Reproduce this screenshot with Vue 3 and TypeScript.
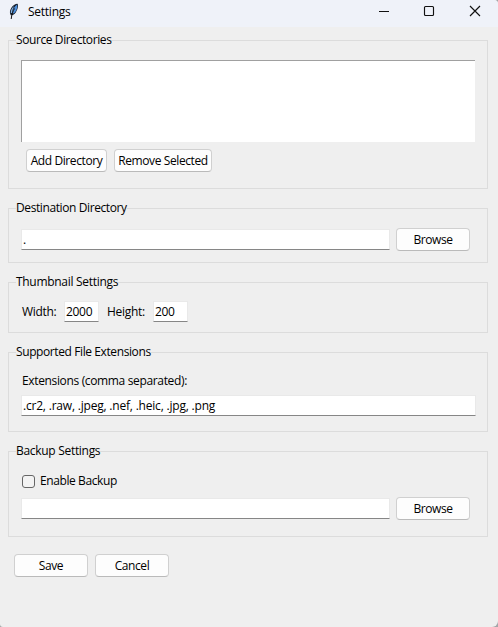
<script setup lang="ts">
import { ref } from 'vue'

const destination = ref('.')
const thumbWidth = ref('2000')
const thumbHeight = ref('200')
const extensions = ref('.cr2, .raw, .jpeg, .nef, .heic, .jpg, .png')
const backupEnabled = ref(false)
const backupPath = ref('')
</script>

<template>
  <main class="window">
    <header class="titlebar">
      <svg class="feather" width="12" height="17" viewBox="0 0 12 17">
        <path d="M3 12.500C.8 9.500 2.300 5.300 5 2.800 7 1 9.200.2 9.700 1.100c.9 1.500-.1 6-2.100 8.600-1.100 1.500-2.500 2.500-4.600 2.800z" fill="#17202e" />
        <path d="M4.300 10.800C4.300 7 6.200 3.300 9.200 1.500c.4 2.200-.4 5.800-2 7.800-.7.900-1.700 1.300-2.900 1.500z" fill="#4d8edb" />
        <path d="M2.800 10C2.500 7.500 4 4.800 6 3 5 5.500 4.200 7.600 3.900 10z" fill="#8bb9e8" />
        <path d="M6.500 5.500C5 8 3.700 11 3.200 16" fill="none" stroke="#141414" />
      </svg>
      <h1 class="title">Settings</h1>
      <svg class="controls" width="104" height="12" viewBox="0 0 104 12" fill="none" stroke="#111">
        <path d="M0 6.500h10" />
        <rect x="45.500" y="1.500" width="9" height="9" rx="1" stroke-width="1.150" />
        <path d="M91 1l10 10M101 1L91 11" stroke-width="1.150" />
      </svg>
    </header>

    <section class="group source">
      <h2 class="legend">Source Directories</h2>
      <div class="listbox"></div>
      <div class="actions">
        <button class="btn add">Add Directory</button>
        <button class="btn remove">Remove Selected</button>
      </div>
    </section>

    <section class="group destination">
      <h2 class="legend">Destination Directory</h2>
      <div class="row">
        <input v-model="destination" class="entry path" />
        <button class="btn">Browse</button>
      </div>
    </section>

    <section class="group thumbs">
      <h2 class="legend">Thumbnail Settings</h2>
      <div class="sizes">
        <label class="width-label">Width:</label>
        <input v-model="thumbWidth" class="entry small" />
        <label class="height-label">Height:</label>
        <input v-model="thumbHeight" class="entry small" />
      </div>
    </section>

    <section class="group extensions">
      <h2 class="legend">Supported File Extensions</h2>
      <label class="ext-label">Extensions (comma separated):</label>
      <input v-model="extensions" class="entry full" />
    </section>

    <section class="group backup">
      <h2 class="legend">Backup Settings</h2>
      <label class="check">
        <input v-model="backupEnabled" type="checkbox" class="box" />
        <span>Enable Backup</span>
      </label>
      <div class="row">
        <input v-model="backupPath" class="entry path" />
        <button class="btn">Browse</button>
      </div>
    </section>

    <footer class="footer">
      <button class="btn">Save</button>
      <button class="btn">Cancel</button>
    </footer>
  </main>
</template>

<style>
body {
  background: #a3a6a8;
}
</style>

<style scoped>
.window {
  box-sizing: border-box;
  width: 498px;
  height: 627px;
  overflow: hidden;
  border-radius: 0 4px 6px 3px;
  background: #efefef;
  color: #000;
  font: 12px/16px "Open Sans", "Noto Sans", sans-serif;
  letter-spacing: -0.4px;
}
.window * {
  box-sizing: border-box;
}
.titlebar {
  display: flex;
  height: 27px;
  padding: 3px 15px 0 8px;
  background: #eff2f9;
}
.title {
  margin: 1px auto 0 8px;
  font: inherit;
  letter-spacing: -0.25px;
}
.controls {
  flex: none;
  margin-top: 2px;
}
.feather {
  flex: none;
}
.group {
  width: 480px;
  margin-left: 8px;
  padding-left: 12px;
  border: 1px solid #dcdcdc;
}
.legend {
  width: max-content;
  height: 16px;
  margin: -9px 0 0 -5px;
  background: #efefef;
  font: inherit;
  white-space: nowrap;
}
.source {
  height: 149px;
  margin-top: 13px;
}
.listbox {
  width: 454px;
  height: 82px;
  margin-top: 12px;
  border: solid #a0a0a0;
  border-width: 1px 0 0 1px;
  background: #fff;
}
.actions {
  display: flex;
  gap: 7px;
  margin: 7px 0 0 5px;
}
.btn {
  width: 74px;
  height: 23px;
  padding: 1px 0 0;
  border: 1px solid #d0d0d0;
  border-bottom-color: #bababa;
  border-radius: 4px;
  background: #fdfdfd;
  color: #000;
  font: inherit;
  letter-spacing: inherit;
  white-space: nowrap;
}
.add {
  width: 81px;
}
.remove {
  width: 98px;
}
.destination {
  height: 55px;
  margin-top: 19px;
}
.row {
  display: flex;
  align-items: center;
  gap: 6px;
  height: 23px;
  margin-top: 12px;
}
.entry {
  display: block;
  height: 21px;
  padding: 0 0 0 1px;
  border: 1px solid #e9e9e9;
  border-bottom-color: #868686;
  border-radius: 0;
  outline: none;
  background: #fff;
  color: #000;
  font: inherit;
  letter-spacing: inherit;
}
.path {
  width: 369px;
}
.thumbs {
  height: 51px;
  margin-top: 19px;
}
.thumbs .legend {
  letter-spacing: -0.3px;
}
.sizes {
  display: flex;
  margin-top: 11px;
  padding-left: 1px;
  letter-spacing: -0.3px;
}
.sizes label {
  padding-top: 3px;
}
.width-label {
  width: 42px;
}
.height-label {
  width: 46px;
  margin-left: 8px;
}
.small {
  width: 35px;
}
.extensions {
  height: 80px;
  margin-top: 19px;
}
.ext-label {
  display: block;
  margin: 13px 0 0 1px;
  letter-spacing: -0.35px;
}
.full {
  width: 455px;
  margin-top: 6px;
  letter-spacing: -0.2px;
}
.backup {
  height: 86px;
  margin-top: 19px;
}
.backup .legend {
  letter-spacing: -0.3px;
}
.check {
  display: flex;
  align-items: center;
  gap: 5px;
  height: 16px;
  margin: 14px 0 0 1px;
}
.box {
  appearance: none;
  width: 13px;
  height: 13px;
  margin: 0;
  border: 1px solid #666;
  border-radius: 3px;
  background: #f3f3f3;
}
.backup .row {
  margin-top: 8px;
}
.footer {
  display: flex;
  gap: 7px;
  margin: 17px 0 0 14px;
}
</style>
